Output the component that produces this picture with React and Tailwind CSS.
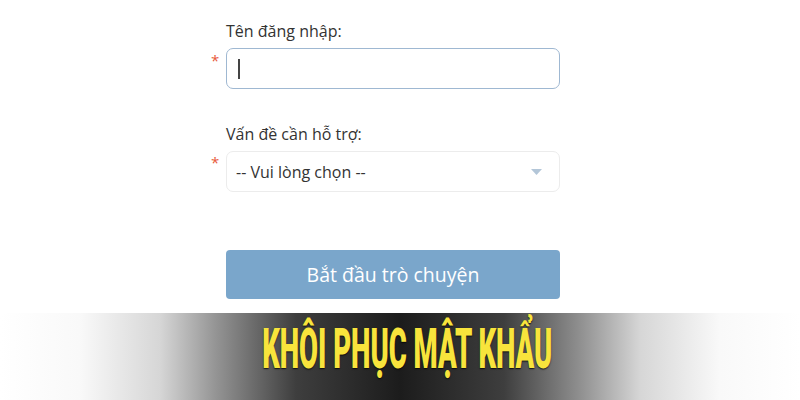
export default function App() {
  const font = { fontFamily: '"Open Sans", "Noto Sans", sans-serif' };
  return (
    <div className="w-[800px] h-[400px] bg-white flex flex-col overflow-hidden" style={font}>
      <div className="ml-[226px] w-[334px] flex flex-col">
        <div className="mt-[21px] h-[20px] leading-[20px] text-[16px] text-[#333]">Tên đăng nhập:</div>
        <div className="relative mt-[7px]">
          <span className="absolute left-[-15px] top-[1px] text-[15px] text-[#e8593a]">*</span>
          <div className="h-[41px] rounded-[7px] border border-[#9fb8d2] flex items-center pl-[11px]">
            <div className="w-[1.5px] h-[20px] bg-[#444]"></div>
          </div>
        </div>
        <div className="mt-[35px] h-[20px] leading-[20px] text-[16px] text-[#333]">Vấn đề cần hỗ trợ:</div>
        <div className="relative mt-[7px]">
          <span className="absolute left-[-15px] top-[0px] text-[15px] text-[#e8593a]">*</span>
          <div className="h-[41px] rounded-[7px] border border-[#ececec] flex items-center justify-between pl-[9px] pr-[17px]">
            <span className="text-[16px] text-[#333]">-- Vui lòng chọn --</span>
            <svg width="11" height="6" viewBox="0 0 11 6"><path d="M0 0h11L5.5 6z" fill="#b3c6d8" /></svg>
          </div>
        </div>
        <div className="mt-[58px] h-[49px] rounded-[4px] bg-[#7aa6cb] flex items-center justify-center text-white text-[19.5px]">
          Bắt đầu trò chuyện
        </div>
      </div>
      <div className="mt-[14px] flex-1 flex items-start justify-center bg-[linear-gradient(to_right,#ffffff_0%,#f9f9f9_10%,#d6d6d6_20%,#949494_27%,#3e3e3e_37%,#1c1c1c_50%,#3e3e3e_63%,#949494_73%,#d6d6d6_80%,#f9f9f9_90%,#ffffff_100%)]">
        <div className="ml-[14px] mt-[6px] inline-block scale-x-[0.5] whitespace-nowrap text-[55px] leading-[60px] font-black text-[#f8e43c] [text-shadow:0_1px_2px_rgba(0,0,0,0.8)]" style={{ fontFamily: 'Roboto, "Noto Sans", sans-serif' }}>
          KHÔI PHỤC MẬT KHẨU
        </div>
      </div>
    </div>
  );
}
